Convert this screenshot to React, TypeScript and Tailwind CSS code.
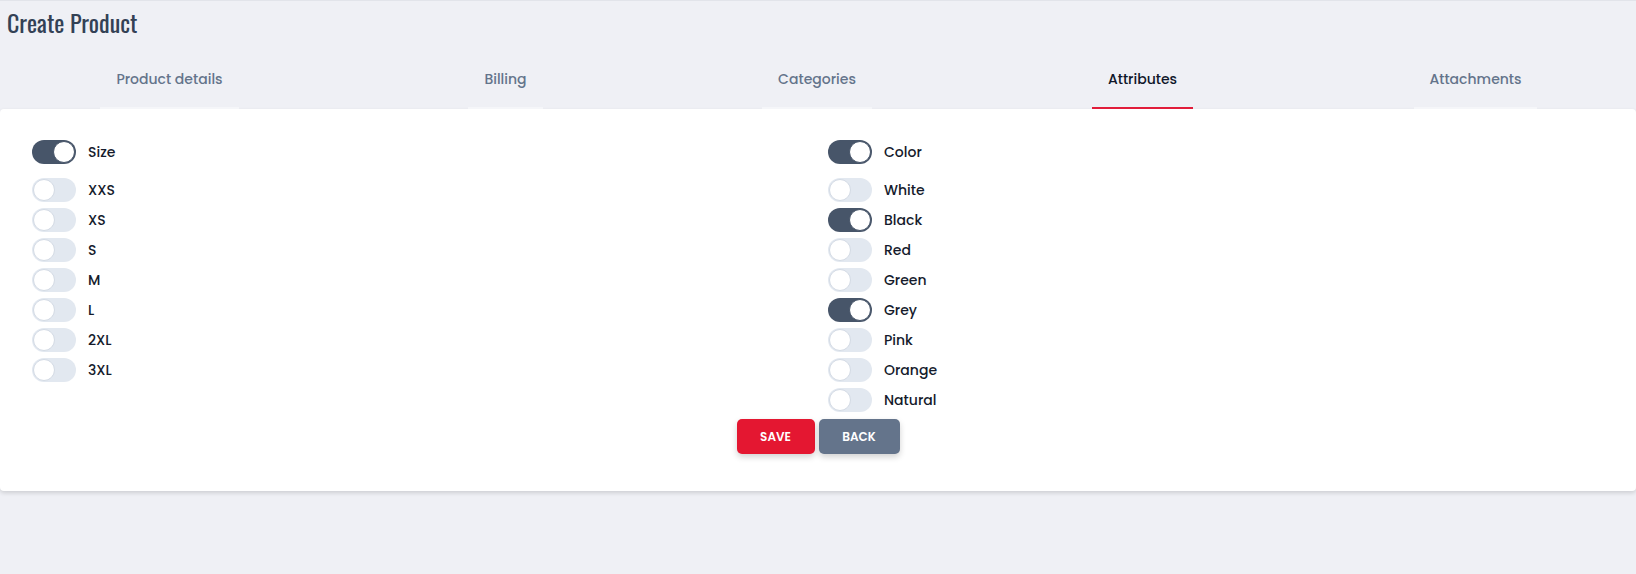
import { useState } from "react";

const tabs = [
  { name: "Product details", cls: "w-[139px] ml-[100px]" },
  { name: "Billing", cls: "w-[75px] ml-[229px]" },
  { name: "Categories", cls: "w-[110px] ml-[219px]" },
  { name: "Attributes", cls: "w-[101px] ml-[220px]" },
  { name: "Attachments", cls: "w-[123px] ml-[221px]" },
];

const sizes = ["XXS", "XS", "S", "M", "L", "2XL", "3XL"];
const colors = ["White", "Black", "Red", "Green", "Grey", "Pink", "Orange", "Natural"];

function Toggle({ on, onClick }: { on: boolean; onClick: () => void }) {
  return (
    <button
      onClick={onClick}
      className={`relative w-11 h-6 rounded-full shrink-0 transition-colors ${
        on ? "bg-[#475569]" : "bg-[#e2e8f0]"
      }`}
    >
      <span
        className={`absolute top-[1px] w-[22px] h-[22px] rounded-full bg-white border transition-all ${
          on ? "left-[21px] border-[#475569]" : "left-[1px] border-[#d3dae4]"
        }`}
      />
    </button>
  );
}

function Row({ label, on, onClick }: { label: string; on: boolean; onClick: () => void }) {
  return (
    <div className="flex items-center h-6">
      <Toggle on={on} onClick={onClick} />
      <span className="ml-3 text-sm font-medium text-[#151b2c]">{label}</span>
    </div>
  );
}

export default function App() {
  const [activeTab, setActiveTab] = useState("Attributes");
  const [sizeOn, setSizeOn] = useState(true);
  const [colorOn, setColorOn] = useState(true);
  const [picked, setPicked] = useState<string[]>(["Black", "Grey"]);

  const flip = (v: string) =>
    setPicked((p) => (p.includes(v) ? p.filter((x) => x !== v) : [...p, v]));

  return (
    <div className="min-h-screen bg-[#eff0f5] border-t border-[#e2e4ea] font-['Poppins','Inter',sans-serif]">
      {/* Title */}
      <div className="h-[46px] pb-[5px] flex items-center px-[7px]">
        <h1 className="text-2xl leading-none text-[#334155] font-['Oswald','Liberation_Sans_Narrow','DejaVu_Sans_Condensed',sans-serif]">
          Create Product
        </h1>
      </div>

      {/* Tabs */}
      <div className="flex">
        {tabs.map((t) => (
          <button
            key={t.name}
            onClick={() => setActiveTab(t.name)}
            className={`${t.cls} h-[62px] pt-[4px] shrink-0 flex items-center justify-center border-b-2 text-sm font-medium whitespace-nowrap ${
              activeTab === t.name
                ? "border-[#e11d3a] text-[#0f172a]"
                : "border-[#f5f6f9] text-[#64748b]"
            }`}
          >
            {t.name}
          </button>
        ))}
      </div>

      {/* Card */}
      <div className="bg-white rounded-[4px] shadow-[0_2px_4px_rgba(0,0,0,0.14)] pt-[31px] px-8 pb-[37px]">
        <div className="grid grid-cols-2 gap-x-5">
          <div>
            <Row label="Size" on={sizeOn} onClick={() => setSizeOn(!sizeOn)} />
            <div className="mt-[14px] flex flex-col gap-[6px]">
              {sizes.map((s) => (
                <Row key={s} label={s} on={picked.includes(s)} onClick={() => flip(s)} />
              ))}
            </div>
          </div>
          <div>
            <Row label="Color" on={colorOn} onClick={() => setColorOn(!colorOn)} />
            <div className="mt-[14px] flex flex-col gap-[6px]">
              {colors.map((c) => (
                <Row key={c} label={c} on={picked.includes(c)} onClick={() => flip(c)} />
              ))}
            </div>
          </div>
        </div>

        <div className="mt-[7px] flex justify-center gap-1">
          <button className="w-[78px] h-[35px] rounded-[5px] bg-[#e41731] text-white text-xs font-semibold uppercase shadow-[0_3px_6px_rgba(0,0,0,0.18)]">
            Save
          </button>
          <button className="w-[81px] h-[35px] rounded-[5px] bg-[#64748b] text-white text-xs font-semibold uppercase shadow-[0_3px_6px_rgba(0,0,0,0.18)]">
            Back
          </button>
        </div>
      </div>
    </div>
  );
}
